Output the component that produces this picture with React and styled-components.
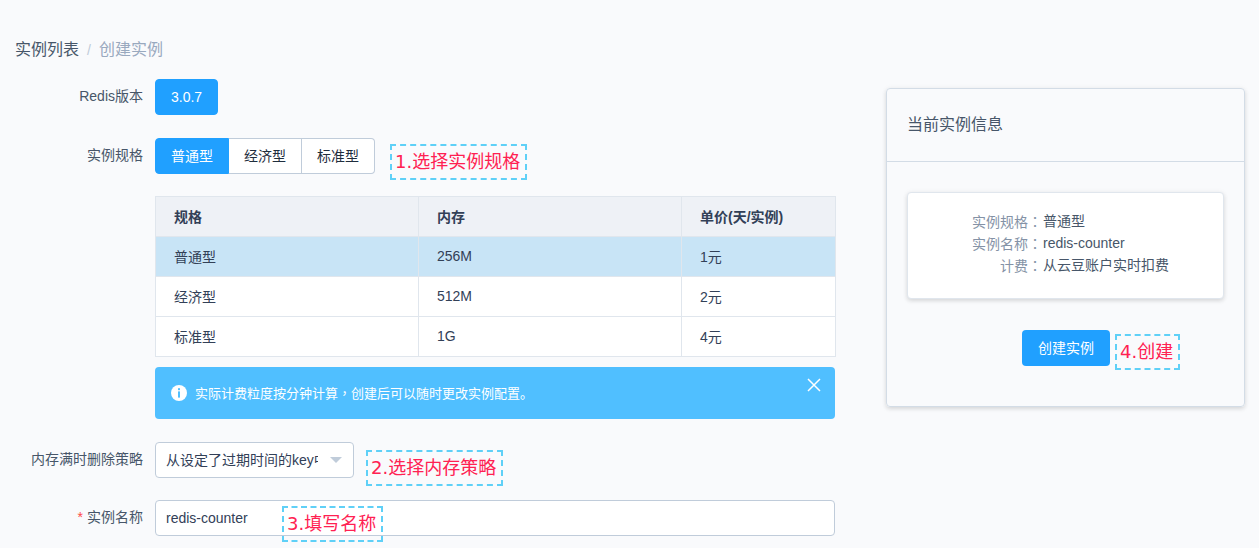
import React from 'react';
import styled, { createGlobalStyle } from 'styled-components';

const GlobalStyle = createGlobalStyle`
  html, body {
    margin: 0;
    height: 548px;
    overflow: hidden;
    background: #f9fafc;
  }
  * { box-sizing: border-box; }
  body {
    font-family: "Liberation Sans", "Noto Sans CJK SC", sans-serif;
    font-size: 14px;
    color: #1f2d3d;
  }
`;

const Page = styled.div`
  display: flex;
  align-items: flex-start;
  padding: 41px 14px 0 15px;
  gap: 51px;
`;

const Main = styled.div`
  width: 820px;
  flex: none;
`;

const Breadcrumb = styled.div`
  display: flex;
  font-size: 16px;
  line-height: 18px;
  color: #475669;
  margin-bottom: 20px;
`;

const Sep = styled.span`
  color: #bfcbd9;
  margin: 0 8px;
  font-size: 14px;
`;

const Current = styled.span`
  color: #99a9bf;
`;

const FormRow = styled.div`
  position: relative;
  display: flex;
  align-items: flex-start;
  margin-bottom: ${(p) => p.$gap}px;
`;

const Label = styled.label`
  width: 140px;
  flex: none;
  padding-right: 12px;
  text-align: right;
  line-height: 34px;
  color: #475669;
`;

const Required = styled.span`
  color: #ff4949;
  margin-right: 4px;
`;

const Field = styled.div`
  flex: 1;
  min-width: 0;
`;

const SpecPicker = styled.div`
  display: flex;
`;

const Segments = styled.div`
  display: inline-flex;
  height: 36px;
`;

const Segment = styled.div`
  height: 36px;
  padding: 0 15px;
  line-height: 34px;
  font-size: 14px;
  border: 1px solid ${(p) => (p.$active ? '#20a0ff' : '#c0ccda')};
  border-left-width: ${(p) => (p.$first ? 1 : 0)}px;
  background: ${(p) => (p.$active ? '#20a0ff' : '#fff')};
  color: ${(p) => (p.$active ? '#fff' : '#1f2d3d')};
  &:first-child { border-radius: 4px 0 0 4px; }
  &:last-child { border-radius: 0 4px 4px 0; }
  &:only-child { border-radius: 4px; }
`;

const Note = styled.div`
  flex: none;
  height: 36px;
  padding: 0 5px 0 3px;
  border: 2px dashed #5fd0f7;
  color: #ff2152;
  font-family: "DejaVu Sans", "Noto Sans CJK SC", sans-serif;
  font-size: 18px;
  line-height: 32px;
  white-space: nowrap;
`;

const SideNote = styled(Note)`
  margin: ${(p) => p.$top}px 0 0 ${(p) => p.$left}px;
`;

const OverNote = styled(Note)`
  position: absolute;
  left: 267px;
  top: 6px;
`;

const SpecTable = styled.table`
  width: 680px;
  border-collapse: collapse;
  table-layout: fixed;
  background: #fff;
  margin-top: 16px;
`;

const Column = styled.col`
  width: ${(p) => p.$width}px;
`;

const HeadCell = styled.th`
  height: 40px;
  padding: 0 18px 2px;
  text-align: left;
  font-weight: bold;
  color: #324057;
  background: #eef1f6;
  border: 1px solid #e0e6ed;
`;

const Cell = styled.td`
  height: 40px;
  padding: 0 18px 2px;
  color: #324057;
  border: 1px solid #e0e6ed;
  background: ${(p) => (p.$selected ? '#c8e4f6' : '#fff')};
`;

const Alert = styled.div`
  position: relative;
  display: flex;
  align-items: center;
  width: 680px;
  height: 52px;
  margin-top: 10px;
  padding: 0 16px;
  border-radius: 4px;
  background: #50bfff;
  color: #fff;
  font-size: 13px;
`;

const AlertText = styled.span`
  margin-bottom: 2px;
`;

const AlertIcon = styled.svg`
  width: 16px;
  height: 16px;
  flex: none;
  margin-right: 8px;
`;

const CloseIcon = styled.svg`
  position: absolute;
  right: 14px;
  top: 11px;
  width: 14px;
  height: 14px;
`;

/* the reference's CJK punctuation sits centred in its cell, as in the TC cut */
const Punct = styled.span`
  font-family: "Noto Sans CJK TC", sans-serif;
`;

const SelectBox = styled.div`
  display: flex;
  align-items: center;
  flex: none;
  width: 199px;
  height: 36px;
  padding: 0 11px 0 10px;
  background: #fff;
  border: 1px solid #c0ccda;
  border-radius: 4px;
`;

const SelectText = styled.div`
  width: 152px;
  margin-bottom: 3px;
  overflow: hidden;
  white-space: nowrap;
  flex: none;
  color: #324057;
`;

const Caret = styled.div`
  margin-left: auto;
  width: 0;
  height: 0;
  border-left: 6.5px solid transparent;
  border-right: 6.5px solid transparent;
  border-top: 6px solid #c0ccda;
`;

const TextInput = styled.div`
  width: 680px;
  height: 36px;
  padding: 0 10px;
  line-height: 34px;
  color: #324057;
  background: #fff;
  border: 1px solid #c0ccda;
  border-radius: 4px;
`;

const InfoCard = styled.aside`
  width: 359px;
  height: 319px;
  flex: none;
  margin-top: 47px;
  border: 1px solid #d3dce6;
  border-radius: 4px;
  box-shadow: 0 2px 4px rgba(0, 0, 0, 0.12), 0 0 6px rgba(0, 0, 0, 0.04);
`;

const CardHeader = styled.div`
  height: 73px;
  padding: 0 20px;
  line-height: 72px;
  font-size: 16px;
  color: #475669;
  border-bottom: 1px solid #d3dce6;
`;

const CardBody = styled.div`
  padding: 30px 20px;
`;

const Summary = styled.dl`
  display: grid;
  grid-template-columns: 135px 1fr;
  grid-auto-rows: 22px;
  align-content: center;
  height: 107px;
  margin: 0 0 31px;
  padding-bottom: 6px;
  background: #fff;
  border: 1px solid #e0e6ed;
  border-radius: 4px;
  box-shadow: 0 2px 4px rgba(0, 0, 0, 0.12), 0 0 6px rgba(0, 0, 0, 0.04);
  line-height: 22px;
`;

const SummaryKey = styled.dt`
  text-align: right;
  color: #8492a6;
  padding-right: 1px;
`;

const SummaryValue = styled.dd`
  margin: 0;
  color: #475669;
`;

const Actions = styled.div`
  display: flex;
  align-items: flex-start;
  padding-left: 115px;
`;

const PrimaryButton = styled.div`
  height: 36px;
  padding: 0 16px;
  line-height: 36px;
  flex: none;
  color: #fff;
  background: #20a0ff;
  border-radius: 4px;
`;

const summary = [
  ['实例规格', '普通型'],
  ['实例名称', 'redis-counter'],
  ['计费', '从云豆账户实时扣费'],
];

const specs = [
  ['普通型', '256M', '1元'],
  ['经济型', '512M', '2元'],
  ['标准型', '1G', '4元'],
];

export default function App() {
  return (
    <>
      <GlobalStyle />
      <Page>
        <Main>
          <Breadcrumb>
            <span>实例列表</span>
            <Sep>/</Sep>
            <Current>创建实例</Current>
          </Breadcrumb>

          <FormRow $gap={23}>
            <Label>Redis版本</Label>
            <Field>
              <Segments>
                <Segment $active $first>3.0.7</Segment>
              </Segments>
            </Field>
          </FormRow>

          <FormRow $gap={23}>
            <Label>实例规格</Label>
            <Field>
              <SpecPicker>
                <Segments>
                  <Segment $active $first>普通型</Segment>
                  <Segment>经济型</Segment>
                  <Segment>标准型</Segment>
                </Segments>
                <SideNote $top={6} $left={15}>1.选择实例规格</SideNote>
              </SpecPicker>
              <SpecTable>
                <colgroup>
                  <Column $width={263} />
                  <Column $width={263} />
                  <Column $width={154} />
                </colgroup>
                <thead>
                  <tr>
                    <HeadCell>规格</HeadCell>
                    <HeadCell>内存</HeadCell>
                    <HeadCell>单价(天/实例)</HeadCell>
                  </tr>
                </thead>
                <tbody>
                  {specs.map((row, i) => (
                    <tr key={row[0]}>
                      {row.map((c) => (
                        <Cell key={c} $selected={i === 0}>{c}</Cell>
                      ))}
                    </tr>
                  ))}
                </tbody>
              </SpecTable>
              <Alert>
                <AlertIcon viewBox="0 0 16 16">
                  <circle cx="8" cy="8" r="8" fill="#fff" />
                  <rect x="7" y="3.2" width="2" height="2" fill="#50bfff" />
                  <rect x="7" y="6.4" width="2" height="6.2" fill="#50bfff" />
                </AlertIcon>
                <AlertText>实际计费粒度按分钟计算<Punct>，</Punct>创建后可以随时更改实例配置。</AlertText>
                <CloseIcon viewBox="0 0 14 14">
                  <path d="M1 1L13 13M13 1L1 13" stroke="#fff" strokeWidth="1.5" fill="none" />
                </CloseIcon>
              </Alert>
            </Field>
          </FormRow>

          <FormRow $gap={14}>
            <Label>内存满时删除策略</Label>
            <SelectBox>
              <SelectText>从设定了过期时间的key中删除</SelectText>
              <Caret />
            </SelectBox>
            <SideNote $top={8} $left={12}>2.选择内存策略</SideNote>
          </FormRow>

          <FormRow $gap={0}>
            <Label><Required>*</Required>实例名称</Label>
            <TextInput>redis-counter</TextInput>
            <OverNote>3.填写名称</OverNote>
          </FormRow>
        </Main>

        <InfoCard>
          <CardHeader>当前实例信息</CardHeader>
          <CardBody>
            <Summary>
              {summary.map(([k, v]) => (
                <React.Fragment key={k}>
                  <SummaryKey>{k}<Punct>：</Punct></SummaryKey>
                  <SummaryValue>{v}</SummaryValue>
                </React.Fragment>
              ))}
            </Summary>
            <Actions>
              <PrimaryButton>创建实例</PrimaryButton>
              <SideNote $top={4} $left={5}>4.创建</SideNote>
            </Actions>
          </CardBody>
        </InfoCard>
      </Page>
    </>
  );
}
